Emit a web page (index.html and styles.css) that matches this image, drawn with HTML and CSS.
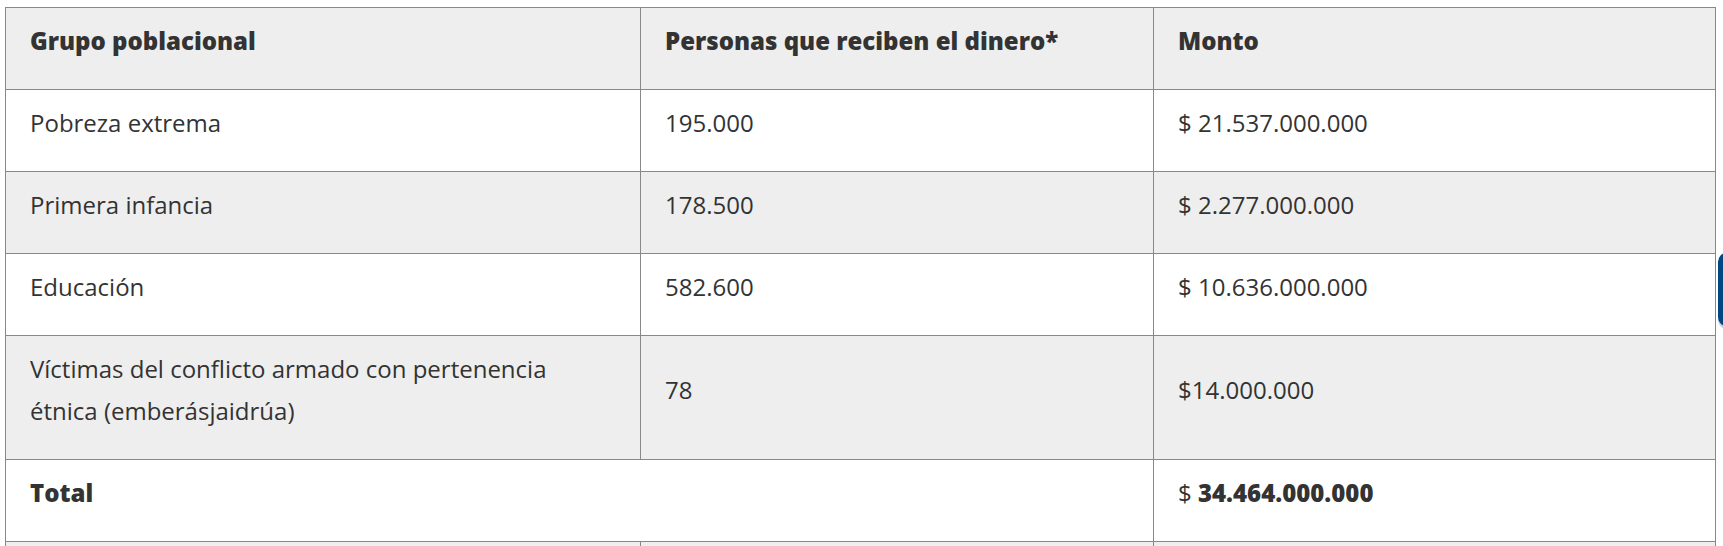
FILE: index.html
```html
<!DOCTYPE html>
<html lang="es">
<head>
<meta charset="utf-8">
<title>Tabla</title>
<link rel="stylesheet" href="styles.css">
</head>
<body>
<div class="wrap">
  <table class="data">
    <colgroup>
      <col class="c1"><col class="c2"><col class="c3">
    </colgroup>
    <tr class="head">
      <th>Grupo poblacional</th>
      <th>Personas que reciben el dinero*</th>
      <th>Monto</th>
    </tr>
    <tr>
      <td>Pobreza extrema</td>
      <td>195.000</td>
      <td>$ 21.537.000.000</td>
    </tr>
    <tr class="alt">
      <td>Primera infancia</td>
      <td>178.500</td>
      <td>$ 2.277.000.000</td>
    </tr>
    <tr>
      <td>Educación</td>
      <td>582.600</td>
      <td>$ 10.636.000.000</td>
    </tr>
    <tr class="alt">
      <td>Víctimas del conflicto armado con pertenencia étnica (emberásjaidrúa)</td>
      <td>78</td>
      <td>$14.000.000</td>
    </tr>
    <tr>
      <td colspan="2"><strong>Total</strong></td>
      <td>$ <strong>34.464.000.000</strong></td>
    </tr>
    <tr class="alt">
      <td>&nbsp;</td>
      <td>&nbsp;</td>
      <td>&nbsp;</td>
    </tr>
  </table>
</div>
<div class="float-btn"></div>
</body>
</html>
```
FILE: styles.css
```css
html, body {
  margin: 0;
  padding: 0;
  background: #fff;
  overflow: hidden;
}
body {
  font-family: "Open Sans", "Liberation Sans", sans-serif;
  color: #333;
}
.wrap {
  padding: 7px 0 0 5px;
}
.data {
  border-collapse: collapse;
  width: 1710px;
  table-layout: fixed;
  font-size: 24px;
}
.c1 { width: 635px; }
.c2 { width: 513px; }
.c3 { width: 562px; }
.data th,
.data td {
  border: 1px solid #888;
  padding: 12px 24px 27px;
  line-height: 42px;
  text-align: left;
  vertical-align: middle;
}
.data th {
  font-weight: 800;
  background: #eee;
}
.data strong {
  font-weight: 800;
}
.data tr.alt td {
  background: #eee;
}
.float-btn {
  position: fixed;
  left: 1718px;
  top: 252px;
  width: 30px;
  height: 75px;
  background: #004884;
  border-radius: 10px;
  box-shadow: 0 3px 0 #d6d6d6;
}
```
